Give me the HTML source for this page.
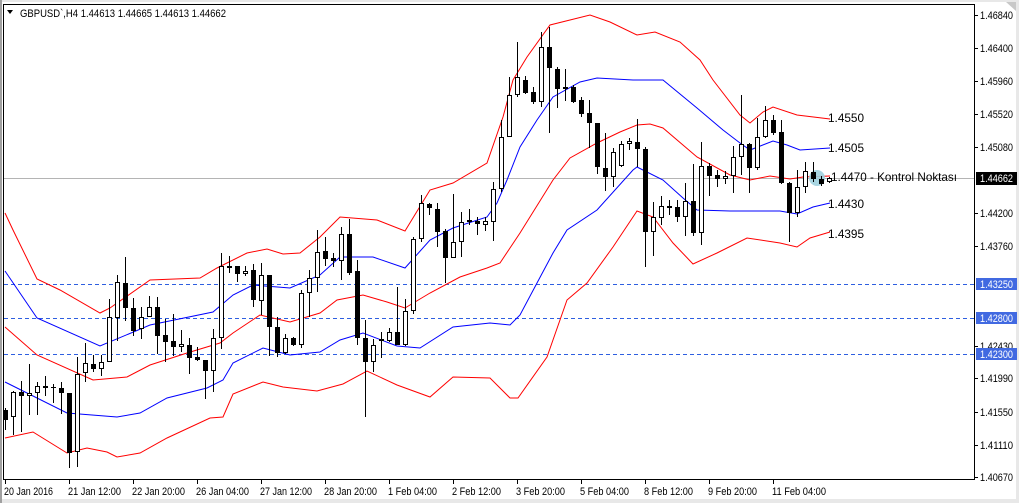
<!DOCTYPE html>
<html><head><meta charset="utf-8"><style>
html,body{margin:0;padding:0;background:#fff;}
body{width:1019px;height:503px;overflow:hidden;position:relative;font-family:"Liberation Sans","DejaVu Sans",sans-serif;}
svg{position:absolute;left:0;top:0;}
text{font-family:"Liberation Sans","DejaVu Sans",sans-serif;}
</style></head><body>
<svg width="1019" height="503" viewBox="0 0 1019 503" xmlns="http://www.w3.org/2000/svg">
<rect x="0" y="0" width="1019" height="503" fill="#ffffff"/>
<rect x="0" y="499" width="1019" height="4" fill="#e8e8e8"/>
<rect x="1016" y="0" width="3" height="503" fill="#e8e8e8"/>
<rect x="0" y="0" width="1019" height="2" fill="#e8e8e8"/>
<rect x="0" y="0" width="2" height="503" fill="#a0a0a0"/>
<rect x="3.5" y="4.5" width="971" height="475" fill="none" stroke="#000" stroke-width="1"/>
<polygon points="1006,2 1016,2 1016,11" fill="#c8c8c8"/>
<g stroke="#2e5fe0" stroke-width="1" stroke-dasharray="4,3" shape-rendering="crispEdges">
<line x1="4" y1="284.5" x2="974" y2="284.5"/>
<line x1="4" y1="318.5" x2="974" y2="318.5"/>
<line x1="4" y1="354.5" x2="974" y2="354.5"/>
</g>
<line x1="4" y1="178.5" x2="974" y2="178.5" stroke="#b4b4b4" stroke-width="1" shape-rendering="crispEdges"/>
<g fill="none" stroke-width="1">
<polyline stroke="#ff0000" points="5,213 13,230 37,279 60,290 100,313 110,308 150,280 200,278 217,268 247,253 267,249 283,254 300,253 320,237 340,217 377,220 405,231 430,190 453,183 487,163 503,117 513,80 527,57 550,25 570,20 590,15 610,22 637,35 655,32 680,42 700,60 713,80 740,115 750,123 763,112 773,107 797,115 830,119"/>
<polyline stroke="#0000ff" points="5,271 37,318 100,346 150,325 213,312 233,295 253,285 290,288 320,275 340,257 373,257 405,268 430,240 453,228 487,217 497,203 507,180 520,147 537,120 553,97 580,82 597,78 633,80 663,80 697,108 723,130 740,143 750,150 773,141 787,145 800,150 830,148"/>
<polyline stroke="#ff0000" points="5,327 37,355 93,380 127,377 150,365 187,353 220,343 233,333 260,315 290,322 320,313 337,300 363,295 387,302 405,308 430,293 460,277 487,268 500,263 520,233 553,180 570,158 597,143 620,132 637,125 650,124 663,128 697,157 730,175 750,180 770,176 790,179 803,177 830,176"/>
<polyline stroke="#0000ff" points="5,382 67,413 117,417 140,413 167,398 207,388 223,380 233,363 263,348 290,355 320,352 340,340 363,333 397,346 420,348 453,327 490,323 510,325 520,315 537,283 553,253 567,230 597,210 633,170 637,167 663,180 683,198 697,210 730,211 780,211 797,214 813,207 830,203"/>
<polyline stroke="#ff0000" points="5,438 33,432 67,453 87,448 107,452 117,457 140,453 167,438 210,418 223,417 233,394 263,382 283,387 317,391 343,384 367,371 397,385 430,397 453,377 490,378 510,398 518,398 547,357 567,300 587,283 613,247 637,211 653,217 673,243 693,264 717,253 747,238 780,243 797,247 810,238 830,232"/>
</g>
<circle cx="817" cy="178" r="8" fill="#9fd0de" opacity="0.9"/>
<path fill="none" stroke="#000" stroke-width="1" shape-rendering="crispEdges" d="M5.5 408V430M13.5 391V435M21.5 381V432M29.5 364V415M37.5 382V415M45.5 376V396M53.5 384V403M61.5 382V414M69.5 393V468M77.5 357V467M85.5 343V382M93.5 355V372M101.5 355V376M109.5 299V362M117.5 275V341M125.5 257V321M133.5 298V336M141.5 307V339M149.5 296V317M157.5 297V354M165.5 319V362M173.5 314V356M181.5 330V352M189.5 338V374M197.5 347V361M205.5 360V399M213.5 329V392M221.5 253V349M229.5 256V273M237.5 266V282M245.5 266V276M253.5 264V307M261.5 263V315M269.5 275V356M277.5 317V357M285.5 334V354M293.5 337V346M301.5 290V348M309.5 270V317M317.5 230V292M325.5 237V266M333.5 253V267M341.5 227V280M349.5 219V275M357.5 260V345M365.5 320V417M373.5 339V372M381.5 332V358M389.5 328V342M397.5 287V345M405.5 299V346M413.5 237V314M421.5 195V242M429.5 203V215M437.5 203V247M445.5 229V283M453.5 194V258M461.5 212V257M469.5 209V225M477.5 217V235M485.5 217V231M493.5 182V241M501.5 120V192M509.5 77V137M517.5 42V97M525.5 76V94M533.5 87V104M541.5 32V107M549.5 27V133M557.5 67V108M565.5 69V101M573.5 85V103M581.5 97V117M589.5 100V148M597.5 123V174M605.5 133V191M613.5 148V187M621.5 141V167M629.5 138V150M637.5 119V167M645.5 147V267M653.5 202V256M661.5 196V225M669.5 200V215M677.5 200V222M685.5 183V236M693.5 164V236M701.5 142V245M709.5 163V196M717.5 170V187M725.5 171V184M733.5 146V193M741.5 95V175M749.5 143V193M757.5 118V170M765.5 106V138M773.5 115V135M781.5 120V184M789.5 182V242M797.5 170V217M805.5 162V193M813.5 162V182M821.5 176V186M829.5 177V183"/>
<g fill="#fff" stroke="#000" stroke-width="1" shape-rendering="crispEdges">
<rect x="11.5" y="392.5" width="4" height="24"/><rect x="27.5" y="393.5" width="4" height="2"/><rect x="35.5" y="386.5" width="4" height="6"/><rect x="75.5" y="374.5" width="4" height="77"/><rect x="83.5" y="363.5" width="4" height="9"/><rect x="99.5" y="362.5" width="4" height="6"/><rect x="107.5" y="317.5" width="4" height="44"/><rect x="115.5" y="282.5" width="4" height="35"/><rect x="139.5" y="317.5" width="4" height="11"/><rect x="147.5" y="307.5" width="4" height="9"/><rect x="179.5" y="344.5" width="4" height="2"/><rect x="211.5" y="338.5" width="4" height="32"/><rect x="219.5" y="266.5" width="4" height="71"/><rect x="243.5" y="271.5" width="4" height="2"/><rect x="259.5" y="275.5" width="4" height="25"/><rect x="283.5" y="338.5" width="4" height="14"/><rect x="299.5" y="293.5" width="4" height="51"/><rect x="307.5" y="278.5" width="4" height="14"/><rect x="315.5" y="252.5" width="4" height="25"/><rect x="339.5" y="234.5" width="4" height="26"/><rect x="371.5" y="345.5" width="4" height="16"/><rect x="379.5" y="339.5" width="4" height="1"/><rect x="387.5" y="332.5" width="4" height="8"/><rect x="403.5" y="311.5" width="4" height="33"/><rect x="411.5" y="239.5" width="4" height="71"/><rect x="419.5" y="203.5" width="4" height="35"/><rect x="451.5" y="242.5" width="4" height="15"/><rect x="459.5" y="222.5" width="4" height="19"/><rect x="467.5" y="220.5" width="4" height="1"/><rect x="483.5" y="221.5" width="4" height="3"/><rect x="491.5" y="189.5" width="4" height="32"/><rect x="499.5" y="137.5" width="4" height="51"/><rect x="507.5" y="95.5" width="4" height="41"/><rect x="515.5" y="77.5" width="4" height="17"/><rect x="539.5" y="47.5" width="4" height="54"/><rect x="563.5" y="87.5" width="4" height="1"/><rect x="611.5" y="152.5" width="4" height="24"/><rect x="619.5" y="144.5" width="4" height="21"/><rect x="627.5" y="141.5" width="4" height="2"/><rect x="651.5" y="217.5" width="4" height="14"/><rect x="659.5" y="206.5" width="4" height="11"/><rect x="683.5" y="201.5" width="4" height="15"/><rect x="699.5" y="166.5" width="4" height="66"/><rect x="723.5" y="176.5" width="4" height="2"/><rect x="731.5" y="157.5" width="4" height="18"/><rect x="739.5" y="144.5" width="4" height="12"/><rect x="755.5" y="137.5" width="4" height="30"/><rect x="763.5" y="120.5" width="4" height="16"/><rect x="795.5" y="187.5" width="4" height="25"/><rect x="803.5" y="171.5" width="4" height="15"/><rect x="827.5" y="178.5" width="4" height="3"/>
</g>
<g fill="#000" shape-rendering="crispEdges">
<rect x="3" y="410" width="5" height="10"/><rect x="19" y="392" width="5" height="4"/><rect x="43" y="386" width="5" height="2"/><rect x="51" y="387" width="5" height="1"/><rect x="59" y="388" width="5" height="5"/><rect x="67" y="393" width="5" height="60"/><rect x="91" y="364" width="5" height="5"/><rect x="123" y="283" width="5" height="25"/><rect x="131" y="308" width="5" height="23"/><rect x="155" y="307" width="5" height="29"/><rect x="163" y="335" width="5" height="7"/><rect x="171" y="341" width="5" height="6"/><rect x="187" y="345" width="5" height="13"/><rect x="195" y="357" width="5" height="3"/><rect x="203" y="360" width="5" height="11"/><rect x="227" y="266" width="5" height="2"/><rect x="235" y="266" width="5" height="8"/><rect x="251" y="270" width="5" height="30"/><rect x="267" y="275" width="5" height="52"/><rect x="275" y="327" width="5" height="26"/><rect x="291" y="338" width="5" height="7"/><rect x="323" y="251" width="5" height="8"/><rect x="331" y="258" width="5" height="3"/><rect x="347" y="234" width="5" height="39"/><rect x="355" y="271" width="5" height="67"/><rect x="363" y="338" width="5" height="24"/><rect x="395" y="332" width="5" height="13"/><rect x="427" y="204" width="5" height="4"/><rect x="435" y="209" width="5" height="23"/><rect x="443" y="231" width="5" height="27"/><rect x="475" y="221" width="5" height="3"/><rect x="523" y="80" width="5" height="13"/><rect x="531" y="92" width="5" height="10"/><rect x="547" y="47" width="5" height="21"/><rect x="555" y="69" width="5" height="20"/><rect x="571" y="87" width="5" height="15"/><rect x="579" y="100" width="5" height="14"/><rect x="587" y="113" width="5" height="10"/><rect x="595" y="123" width="5" height="44"/><rect x="603" y="168" width="5" height="9"/><rect x="635" y="142" width="5" height="7"/><rect x="643" y="149" width="5" height="83"/><rect x="667" y="206" width="5" height="2"/><rect x="675" y="207" width="5" height="10"/><rect x="691" y="201" width="5" height="32"/><rect x="707" y="166" width="5" height="10"/><rect x="715" y="175" width="5" height="4"/><rect x="747" y="144" width="5" height="24"/><rect x="771" y="120" width="5" height="13"/><rect x="779" y="132" width="5" height="51"/><rect x="787" y="183" width="5" height="30"/><rect x="811" y="172" width="5" height="7"/><rect x="819" y="179" width="5" height="5"/>
</g>
<g font-size="12" fill="#000">
<text x="828" y="122" textLength="36" lengthAdjust="spacingAndGlyphs">1.4550</text>
<text x="828" y="152" textLength="36" lengthAdjust="spacingAndGlyphs">1.4505</text>
<text x="831" y="181" textLength="126" lengthAdjust="spacingAndGlyphs">1.4470 - Kontrol Noktası</text>
<text x="828" y="208" textLength="36" lengthAdjust="spacingAndGlyphs">1.4430</text>
<text x="828" y="238" textLength="36" lengthAdjust="spacingAndGlyphs">1.4395</text>
</g>
<polygon points="7,10 13,10 10,14" fill="#000"/>
<text x="20" y="17" font-size="11" fill="#000" textLength="206" lengthAdjust="spacingAndGlyphs">GBPUSD`,H4  1.44613 1.44665 1.44613 1.44662</text>
<g stroke="#000" shape-rendering="crispEdges">
<line x1="975" y1="15.5" x2="978" y2="15.5"/><line x1="975" y1="48.5" x2="978" y2="48.5"/><line x1="975" y1="81.5" x2="978" y2="81.5"/><line x1="975" y1="114.5" x2="978" y2="114.5"/><line x1="975" y1="147.5" x2="978" y2="147.5"/><line x1="975" y1="213.5" x2="978" y2="213.5"/><line x1="975" y1="246.5" x2="978" y2="246.5"/><line x1="975" y1="346.5" x2="978" y2="346.5"/><line x1="975" y1="378.5" x2="978" y2="378.5"/><line x1="975" y1="412.5" x2="978" y2="412.5"/><line x1="975" y1="445.5" x2="978" y2="445.5"/><line x1="975" y1="477.5" x2="978" y2="477.5"/>
</g>
<g font-size="11" fill="#000" lengthAdjust="spacingAndGlyphs">
<text x="980" y="19" textLength="33" lengthAdjust="spacingAndGlyphs">1.46840</text><text x="980" y="52" textLength="33" lengthAdjust="spacingAndGlyphs">1.46400</text><text x="980" y="85" textLength="33" lengthAdjust="spacingAndGlyphs">1.45960</text><text x="980" y="118" textLength="33" lengthAdjust="spacingAndGlyphs">1.45520</text><text x="980" y="151" textLength="33" lengthAdjust="spacingAndGlyphs">1.45080</text><text x="980" y="217" textLength="33" lengthAdjust="spacingAndGlyphs">1.44200</text><text x="980" y="250" textLength="33" lengthAdjust="spacingAndGlyphs">1.43760</text><text x="980" y="350" textLength="33" lengthAdjust="spacingAndGlyphs">1.42430</text><text x="980" y="382" textLength="33" lengthAdjust="spacingAndGlyphs">1.41990</text><text x="980" y="416" textLength="33" lengthAdjust="spacingAndGlyphs">1.41550</text><text x="980" y="449" textLength="33" lengthAdjust="spacingAndGlyphs">1.41110</text><text x="980" y="481" textLength="33" lengthAdjust="spacingAndGlyphs">1.40670</text>
</g>
<rect x="976" y="172" width="41" height="13" fill="#000"/>
<text x="980" y="182" font-size="11" fill="#fff" textLength="33" lengthAdjust="spacingAndGlyphs">1.44662</text>
<g fill="#4169e1"><rect x="976" y="278" width="41" height="12"/><rect x="976" y="312" width="41" height="12"/><rect x="976" y="348" width="41" height="12"/></g>
<g font-size="11" fill="#fff"><text x="980" y="288" textLength="33" lengthAdjust="spacingAndGlyphs">1.43250</text><text x="980" y="322" textLength="33" lengthAdjust="spacingAndGlyphs">1.42800</text><text x="980" y="358" textLength="33" lengthAdjust="spacingAndGlyphs">1.42300</text></g>
<g stroke="#000" shape-rendering="crispEdges">
<line x1="5.5" y1="480" x2="5.5" y2="484"/><line x1="69.5" y1="480" x2="69.5" y2="484"/><line x1="133.5" y1="480" x2="133.5" y2="484"/><line x1="197.5" y1="480" x2="197.5" y2="484"/><line x1="261.5" y1="480" x2="261.5" y2="484"/><line x1="325.5" y1="480" x2="325.5" y2="484"/><line x1="389.5" y1="480" x2="389.5" y2="484"/><line x1="453.5" y1="480" x2="453.5" y2="484"/><line x1="517.5" y1="480" x2="517.5" y2="484"/><line x1="581.5" y1="480" x2="581.5" y2="484"/><line x1="645.5" y1="480" x2="645.5" y2="484"/><line x1="709.5" y1="480" x2="709.5" y2="484"/><line x1="773.5" y1="480" x2="773.5" y2="484"/>
</g>
<g font-size="11" fill="#000">
<text x="4" y="495" textLength="49" lengthAdjust="spacingAndGlyphs">20 Jan 2016</text><text x="68" y="495" textLength="53" lengthAdjust="spacingAndGlyphs">21 Jan 12:00</text><text x="132" y="495" textLength="53" lengthAdjust="spacingAndGlyphs">22 Jan 20:00</text><text x="196" y="495" textLength="53" lengthAdjust="spacingAndGlyphs">26 Jan 04:00</text><text x="260" y="495" textLength="52" lengthAdjust="spacingAndGlyphs">27 Jan 12:00</text><text x="324" y="495" textLength="53" lengthAdjust="spacingAndGlyphs">28 Jan 20:00</text><text x="388" y="495" textLength="49" lengthAdjust="spacingAndGlyphs">1 Feb 04:00</text><text x="452" y="495" textLength="49" lengthAdjust="spacingAndGlyphs">2 Feb 12:00</text><text x="516" y="495" textLength="49" lengthAdjust="spacingAndGlyphs">3 Feb 20:00</text><text x="580" y="495" textLength="49" lengthAdjust="spacingAndGlyphs">5 Feb 04:00</text><text x="644" y="495" textLength="49" lengthAdjust="spacingAndGlyphs">8 Feb 12:00</text><text x="708" y="495" textLength="49" lengthAdjust="spacingAndGlyphs">9 Feb 20:00</text><text x="772" y="495" textLength="54" lengthAdjust="spacingAndGlyphs">11 Feb 04:00</text>
</g>
</svg>
</body></html>
